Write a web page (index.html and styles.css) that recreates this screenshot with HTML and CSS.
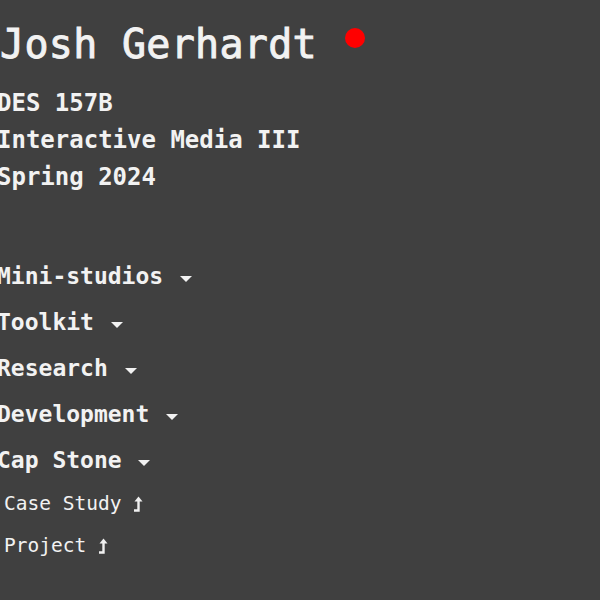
FILE: index.html
```html
<!DOCTYPE html>
<html>
<head>
<meta charset="utf-8">
<link rel="stylesheet" href="styles.css">
</head>
<body>
<div class="page">
  <header class="head">
    <h1 class="title">Josh Gerhardt</h1>
    <span class="dot"></span>
  </header>
  <div class="course">
    <div>DES 157B</div>
    <div>Interactive Media III</div>
    <div>Spring 2024</div>
  </div>
  <nav class="nav">
    <div class="item">Mini-studios <span class="caret"></span></div>
    <div class="item">Toolkit <span class="caret"></span></div>
    <div class="item">Research <span class="caret"></span></div>
    <div class="item">Development <span class="caret"></span></div>
    <div class="item">Cap Stone <span class="caret"></span></div>
  </nav>
  <div class="links">
    <div class="link">Case Study <svg class="up" viewBox="0 0 10 16" width="10" height="16"><path d="M1 14.5 H5.5 V3" fill="none" stroke="#f0f0f0" stroke-width="2.4"/><path d="M1.5 5.5 L5.5 0.5 L9.5 5.5 Z" fill="#f0f0f0"/></svg></div>
    <div class="link">Project <svg class="up" viewBox="0 0 10 16" width="10" height="16"><path d="M1 14.5 H5.5 V3" fill="none" stroke="#f0f0f0" stroke-width="2.4"/><path d="M1.5 5.5 L5.5 0.5 L9.5 5.5 Z" fill="#f0f0f0"/></svg></div>
  </div>
</div>
</body>
</html>
```
FILE: styles.css
```css
html, body {
  margin: 0;
  padding: 0;
  background: #404040;
}
body {
  color: #f2f2f2;
  font-family: "DejaVu Sans Mono", "Liberation Mono", monospace;
  overflow: hidden;
}
.page {
  margin-left: -3px;
  padding-top: 20px;
}
.head {
  display: flex;
  align-items: flex-start;
  gap: 28px;
}
.title {
  margin: 0 0 0 3px;
  font-size: 40px;
  font-weight: normal;
  line-height: 48px;
  letter-spacing: 0.3px;
  -webkit-text-stroke: 0.9px #f2f2f2;
}
.dot {
  width: 20px;
  height: 20px;
  border-radius: 50%;
  background: #ff0000;
  margin-top: 8px;
}
.course {
  margin-top: 17px;
  font-size: 24px;
  line-height: 37px;
  font-weight: bold;
}
.nav {
  margin-top: 57px;
  font-size: 23px;
  line-height: 46px;
  font-weight: bold;
}
.item {
  display: flex;
  align-items: center;
  white-space: pre;
}
.caret {
  display: inline-block;
  width: 0;
  height: 0;
  border-left: 6px solid transparent;
  border-right: 6px solid transparent;
  border-top: 6px solid #f2f2f2;
  margin-top: 6px;
  margin-left: 3px;
}
.links {
  padding-left: 7px;
  font-size: 19.5px;
  line-height: 42px;
}
.link {
  display: flex;
  align-items: center;
  white-space: pre;
}
.up {
  margin-left: 0;
}
```
